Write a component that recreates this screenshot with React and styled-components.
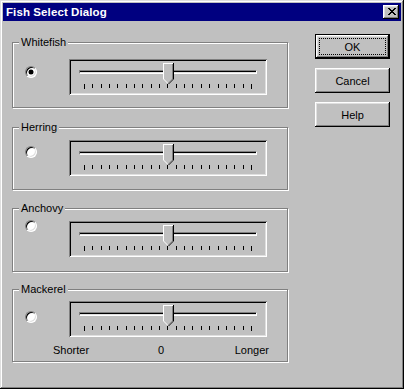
import React from "react";
import styled, { createGlobalStyle } from "styled-components";

const Global = createGlobalStyle`
  html, body { margin: 0; padding: 0; background: #c0c0c0; }
  * { box-sizing: border-box; }
  body { font-family: "Liberation Sans", Arial, sans-serif; font-size: 11px; color: #000; }
`;

const Window = styled.div`
  width: 404px;
  height: 389px;
  background: #c0c0c0;
  padding: 3px;
  display: flex;
  flex-direction: column;
  box-shadow: inset -1px -1px #000, inset 1px 1px #dfdfdf, inset -2px -2px #808080, inset 2px 2px #fff;
`;

const TitleBar = styled.div`
  height: 18px;
  background: #000080;
  display: flex;
  align-items: center;
  justify-content: space-between;
  padding: 0 2px 0 3px;
`;

const TitleText = styled.span`
  color: #fff;
  font-weight: bold;
  font-size: 11.5px;
  letter-spacing: 0.1px;
`;

const CloseButton = styled.div`
  width: 16px;
  height: 14px;
  background: #c0c0c0;
  display: flex;
  align-items: center;
  justify-content: center;
  padding: 0 0 1px 1px;
  box-shadow: inset -1px -1px #000, inset 1px 1px #fff, inset -2px -2px #808080, inset 2px 2px #dfdfdf;
`;

const Body = styled.div`
  display: flex;
  padding-left: 9px;
  gap: 27px;
`;

const Column = styled.div`
  width: 276px;
  display: flex;
  flex-direction: column;
`;

const Group = styled.div`
  position: relative;
  height: ${(p) => p.$height}px;
  margin-top: ${(p) => p.$gap}px;
  border: 1px solid #808080;
  box-shadow: inset 1px 1px #fff, 1px 1px #fff;
  padding: 0 18px 0 12px;
`;

const Legend = styled.span`
  position: absolute;
  left: 6px;
  top: -7px;
  padding: 0 2px;
  line-height: 13px;
  background: #c0c0c0;
`;

const Row = styled.div`
  display: flex;
  align-items: flex-start;
`;

const Radio = styled.div`
  width: 12px;
  height: 12px;
  margin-top: ${(p) => p.$top - 1}px;
  border-radius: 50%;
  background: #fff;
  border: 1px solid;
  border-color: #808080 #fff #fff #808080;
  box-shadow: inset 1px 1px #000, inset -1px -1px #dfdfdf;
  display: flex;
  align-items: center;
  justify-content: center;
  &::after {
    content: "";
    display: ${(p) => (p.$checked ? "block" : "none")};
    width: 4px;
    height: 4px;
    border-radius: 50%;
    background: #000;
    box-shadow: 0 0 0 0.5px #000;
  }
`;

const Track = styled.div`
  position: relative;
  width: 198px;
  height: 36px;
  margin-left: 32px;
  margin-top: ${(p) => p.$top - 1}px;
  padding: 11px 10px 0 10px;
  box-shadow: inset 1px 1px #808080, inset -1px -1px #fff, inset 2px 2px #000, inset -2px -2px #dfdfdf;
`;

const Channel = styled.div`
  height: 4px;
  border: 1px solid;
  border-color: #808080 #fff #fff #808080;
  background: linear-gradient(#000 0 1px, #dfdfdf 1px 2px);
`;

const Ticks = styled.div`
  display: flex;
  justify-content: space-between;
  align-items: flex-start;
  width: 168px;
  margin: 10px 0 0 5px;
`;

const Tick = styled.span`
  width: 1px;
  height: ${(p) => (p.$end ? 5 : 4)}px;
  background: #000;
`;

const Thumb = styled.svg`
  position: absolute;
  left: 94px;
  top: 4px;
`;

const Scale = styled.div`
  display: grid;
  grid-template-columns: 1fr auto 1fr;
  margin: 7px 0 0 28px;
  width: 216px;
  line-height: 13px;
`;

const ScaleItem = styled.span`
  text-align: ${(p) => p.$align};
`;

const Buttons = styled.div`
  display: flex;
  flex-direction: column;
  gap: 9px;
  padding-top: 13px;
`;

const Button = styled.div`
  position: relative;
  width: 75px;
  height: 25px;
  display: flex;
  align-items: center;
  justify-content: center;
  background: #c0c0c0;
  border: ${(p) => (p.$default ? "1px solid #000" : "none")};
  box-shadow: inset -1px -1px #000, inset 1px 1px #fff, inset -2px -2px #808080, inset 2px 2px #dfdfdf;
  padding-top: 1px;
`;

const Focus = styled.span`
  position: absolute;
  inset: 3px;
  border: 1px dotted #000;
`;

function CloseGlyph() {
  const rows = ["11000011", "01100110", "00111100", "00011000", "00111100", "01100110", "11000011"];
  return (
    <svg width="8" height="7" viewBox="0 0 8 7" shapeRendering="crispEdges">
      {rows.map((r, y) =>
        r.split("").map((c, x) => (c === "1" ? <rect key={`${x}-${y}`} x={x} y={y} width="1" height="1" fill="#000" /> : null))
      )}
    </svg>
  );
}

function ThumbIcon() {
  return (
    <Thumb width="11" height="21" viewBox="0 0 11 21" shapeRendering="crispEdges">
      <polygon points="0,0 11,0 11,16 5.5,21 0,16" fill="#c0c0c0" />
      <polyline points="0.5,16 0.5,0.5 10,0.5" fill="none" stroke="#fff" strokeWidth="1" />
      <polyline points="0.5,16 5,20.5" fill="none" stroke="#fff" strokeWidth="1" shapeRendering="auto" />
      <polyline points="10.5,0 10.5,16 5.5,21" fill="none" stroke="#000" strokeWidth="1" shapeRendering="auto" />
      <polyline points="9.5,1 9.5,16 5.5,20" fill="none" stroke="#808080" strokeWidth="1" shapeRendering="auto" />
    </Thumb>
  );
}

function Slider({ top }) {
  const ticks = Array.from({ length: 21 }, (_, i) => i);
  return (
    <Track $top={top}>
      <Channel />
      <Ticks>
        {ticks.map((i) => (
          <Tick key={i} $end={i === 0 || i === 20} />
        ))}
      </Ticks>
      <ThumbIcon />
    </Track>
  );
}

const groups = [
  { label: "Whitefish", gap: 21, height: 66, trackTop: 17, radioTop: 24, checked: true },
  { label: "Herring", gap: 19, height: 63, trackTop: 13, radioTop: 19 },
  { label: "Anchovy", gap: 18, height: 64, trackTop: 13, radioTop: 12 },
  { label: "Mackerel", gap: 17, height: 73, trackTop: 12, radioTop: 22, scale: true },
];

export default function App() {
  return (
    <>
      <Global />
      <Window>
        <TitleBar>
          <TitleText>Fish Select Dialog</TitleText>
          <CloseButton>
            <CloseGlyph />
          </CloseButton>
        </TitleBar>
        <Body>
          <Column>
            {groups.map((g) => (
              <Group key={g.label} $gap={g.gap} $height={g.height}>
                <Legend>{g.label}</Legend>
                <Row>
                  <Radio $top={g.radioTop} $checked={g.checked} />
                  <Slider top={g.trackTop} />
                </Row>
                {g.scale && (
                  <Scale>
                    <ScaleItem $align="left">Shorter</ScaleItem>
                    <ScaleItem $align="center">0</ScaleItem>
                    <ScaleItem $align="right">Longer</ScaleItem>
                  </Scale>
                )}
              </Group>
            ))}
          </Column>
          <Buttons>
            <Button $default>
              OK
              <Focus />
            </Button>
            <Button>Cancel</Button>
            <Button>Help</Button>
          </Buttons>
        </Body>
      </Window>
    </>
  );
}
